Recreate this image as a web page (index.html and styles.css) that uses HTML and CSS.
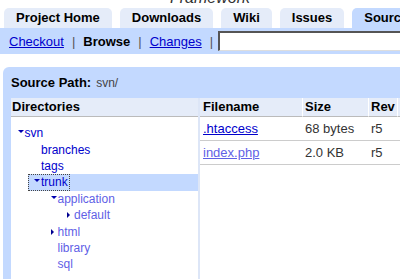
FILE: index.html
```html
<!DOCTYPE html>
<html>
<head>
<meta charset="utf-8">
<link rel="stylesheet" href="styles.css">
</head>
<body>
<div class="title"><span>Framework</span></div>
<div class="tabs">
  <div class="tab">Project Home</div>
  <div class="tab">Downloads</div>
  <div class="tab">Wiki</div>
  <div class="tab">Issues</div>
  <div class="tab active">Source</div>
</div>
<div class="subnav">
  <a href="#">Checkout</a><span class="sep">|</span><b>Browse</b><span class="sep">|</span><a href="#">Changes</a><span class="sep last">|</span><input class="search" type="text">
</div>
<div class="source">
  <div class="path"><b>Source Path:</b><span class="pathval">svn/</span></div>
  <div class="panes">
    <div class="tree">
      <div class="thead">Directories</div>
      <div class="nodes">
        <div class="node"><span class="hit"><i class="tw down"></i><span class="lbl">svn</span></span></div>
        <div class="children">
          <div class="node"><span class="hit"><i class="tw"></i><span class="lbl">branches</span></span></div>
          <div class="node"><span class="hit"><i class="tw"></i><span class="lbl">tags</span></span></div>
          <div class="node sel"><span class="hit"><i class="tw down"></i><span class="lbl">trunk</span></span></div>
          <div class="children">
            <div class="node"><span class="hit"><i class="tw down"></i><span class="lbl soft">application</span></span></div>
            <div class="children">
              <div class="node"><span class="hit"><i class="tw right"></i><span class="lbl soft">default</span></span></div>
            </div>
            <div class="node"><span class="hit"><i class="tw right"></i><span class="lbl soft">html</span></span></div>
            <div class="node"><span class="hit"><i class="tw"></i><span class="lbl soft">library</span></span></div>
            <div class="node"><span class="hit"><i class="tw"></i><span class="lbl soft">sql</span></span></div>
          </div>
        </div>
      </div>
    </div>
    <div class="files">
      <div class="fh">Filename</div>
      <div class="fh">Size</div>
      <div class="fh">Rev</div>
      <div class="fh"></div>
      <div class="fc"><a href="#">.htaccess</a></div>
      <div class="fc">68 bytes</div>
      <div class="fc">r5</div>
      <div class="fc"></div>
      <div class="fc"><a class="soft" href="#">index.php</a></div>
      <div class="fc">2.0 KB</div>
      <div class="fc">r5</div>
      <div class="fc"></div>
    </div>
  </div>
</div>
</body>
</html>
```
FILE: styles.css
```css
html, body {
  margin: 0;
  padding: 0;
  overflow: hidden;
  background: #fff;
}
body {
  width: 400px;
  height: 279px;
  font-family: "Liberation Sans", Arial, sans-serif;
  font-size: 13px;
  color: #000;
}
.title {
  height: 8px;
  overflow: hidden;
  padding-left: 170px;
}
.title span {
  display: block;
  font-style: italic;
  font-size: 16px;
  line-height: 16px;
  margin-top: -10px;
  color: #333;
  white-space: nowrap;
}
.tabs {
  display: flex;
  gap: 8px;
  padding-left: 4px;
  height: 20px;
  white-space: nowrap;
}
.tab {
  flex: none;
  padding: 0 12px;
  line-height: 20px;
  font-weight: bold;
  background: #e5ecf9;
  border-radius: 5px 5px 0 0;
}
.tab.active {
  background: #c3d9ff;
}
.subnav {
  display: flex;
  align-items: center;
  height: 26px;
  background: #c3d9ff;
  padding-left: 9px;
  white-space: nowrap;
}
.subnav a {
  color: #0000cc;
}
.sep {
  color: #555;
  margin: 0 8px;
}
.sep.last {
  margin-right: 5px;
}
.search {
  flex: none;
  width: 300px;
  height: 20px;
  box-sizing: border-box;
  margin: 0;
  padding: 0;
  border-style: solid;
  border-width: 2px 1px 1px 2px;
  border-color: #555 #ddd #ddd #555;
  background: #fff;
}
.source {
  margin: 13px 0 0 3px;
  width: 620px;
  background: #c3d9ff;
  border-radius: 6px 6px 0 0;
  padding: 0 8px;
}
.path {
  height: 31px;
  display: flex;
  align-items: center;
  gap: 5px;
}
.pathval {
  font-size: 12px;
  color: #444;
}
.panes {
  display: flex;
  height: 200px;
}
.tree {
  flex: none;
  width: 187px;
  background: #fff;
  border-right: 2px solid #dde6f7;
}
.thead {
  height: 18px;
  line-height: 18px;
  background: #e5ecf9;
  border-bottom: 1px solid #bbb;
  font-weight: bold;
  padding-left: 1px;
}
.nodes {
  padding-top: 8px;
  font-size: 12px;
}
.children {
  padding-left: 16.5px;
}
.node {
  height: 16.4px;
  display: flex;
}
.node.sel {
  background: #c3d9ff;
}
.hit {
  display: flex;
  align-items: center;
  height: 100%;
  box-sizing: border-box;
  padding: 0 2px 0 6.5px;
}
.node.sel .hit {
  outline: 1px dotted #444;
  outline-offset: -1px;
}
.tw {
  flex: none;
  width: 7px;
  height: 6px;
  position: relative;
}
.tw.down::before {
  content: "";
  position: absolute;
  left: 0;
  top: 0;
  border-left: 3px solid transparent;
  border-right: 3px solid transparent;
  border-top: 3px solid #0000b0;
}
.tw.right::before {
  content: "";
  position: absolute;
  left: 0;
  top: 0;
  border-top: 3px solid transparent;
  border-bottom: 3px solid transparent;
  border-left: 3px solid #000090;
}
.lbl {
  color: #0000cc;
}
.lbl.soft {
  color: #5f5fe6;
}
.files {
  flex: 1;
  display: grid;
  grid-template-columns: 102px 66px 29px 1fr;
  grid-auto-rows: min-content;
  background: #fff;
}
.fh {
  height: 18px;
  line-height: 18px;
  background: #e5ecf9;
  border-bottom: 1px solid #bbb;
  padding-left: 3px;
  font-weight: bold;
}
.fh + .fh {
  border-left: 1px solid #fff;
  padding-left: 2px;
}
.fc {
  height: 23px;
  line-height: 23px;
  border-bottom: 1px solid #ccc;
  padding-left: 3px;
  color: #333;
  white-space: nowrap;
}
.fc a {
  color: #0000cc;
}
.fc a.soft {
  color: #5f5fe6;
}
```
